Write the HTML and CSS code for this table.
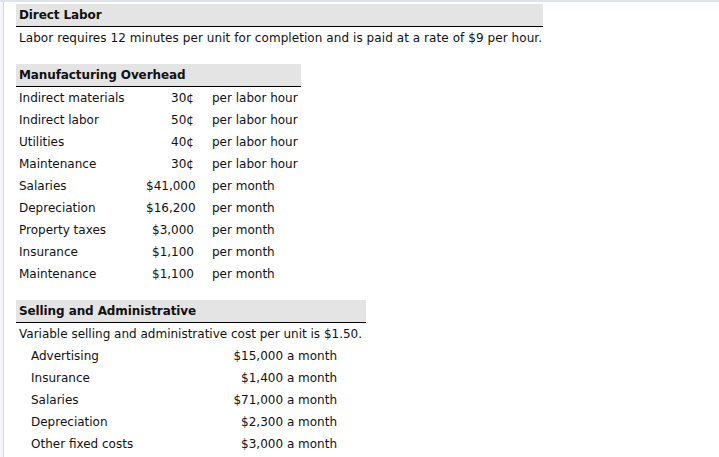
FILE: index.html
```html
<!DOCTYPE html>
<html>
<head>
<meta charset="utf-8">
<link rel="stylesheet" href="styles.css">
</head>
<body>
<div class="frame">
  <div class="content">
    <section class="block dl">
      <div class="hdr">Direct Labor</div>
      <div class="line wide">Labor requires 12 minutes per unit for completion and is paid at a rate of $9 per hour.</div>
    </section>

    <section class="block moh">
      <div class="hdr">Manufacturing Overhead</div>
      <div class="grid3">
        <div class="c1">Indirect materials</div><div class="c2">30¢</div><div class="c3">per labor hour</div>
        <div class="c1">Indirect labor</div><div class="c2">50¢</div><div class="c3">per labor hour</div>
        <div class="c1">Utilities</div><div class="c2">40¢</div><div class="c3">per labor hour</div>
        <div class="c1">Maintenance</div><div class="c2">30¢</div><div class="c3">per labor hour</div>
        <div class="c1">Salaries</div><div class="c2">$41,000</div><div class="c3">per month</div>
        <div class="c1">Depreciation</div><div class="c2">$16,200</div><div class="c3">per month</div>
        <div class="c1">Property taxes</div><div class="c2">$3,000</div><div class="c3">per month</div>
        <div class="c1">Insurance</div><div class="c2">$1,100</div><div class="c3">per month</div>
        <div class="c1">Maintenance</div><div class="c2">$1,100</div><div class="c3">per month</div>
      </div>
    </section>

    <section class="block sa">
      <div class="hdr">Selling and Administrative</div>
      <div class="line">Variable selling and administrative cost per unit is $1.50.</div>
      <div class="grid2">
        <div class="s1">Advertising</div><div class="s2">$15,000 a month</div>
        <div class="s1">Insurance</div><div class="s2">$1,400 a month</div>
        <div class="s1">Salaries</div><div class="s2">$71,000 a month</div>
        <div class="s1">Depreciation</div><div class="s2">$2,300 a month</div>
        <div class="s1">Other fixed costs</div><div class="s2">$3,000 a month</div>
      </div>
    </section>
  </div>
</div>
</body>
</html>
```

FILE: styles.css
```css
html, body {
  margin: 0;
  padding: 0;
  background: #ffffff;
}
body {
  font-family: "DejaVu Sans", Verdana, sans-serif;
  font-size: 12px;
  color: #111;
  width: 719px;
  height: 457px;
  overflow: hidden;
}
.frame {
  height: 457px;
  box-sizing: border-box;
  border-top: 2px solid #dfe4ec;
  padding-left: 4px;
  background: linear-gradient(to right, #f4f6f9 0, #f4f6f9 3px, #cfd6e0 3px, #cfd6e0 4px, #fff 4px);
}
.content {
  padding: 2px 0 0 12px;
  display: flex;
  flex-direction: column;
  align-items: flex-start;
}
.block {
  display: flex;
  flex-direction: column;
}
.hdr {
  background: #e4e4e4;
  border-bottom: 1px solid #000;
  height: 22px;
  line-height: 23px;
  font-weight: bold;
  letter-spacing: -0.1px;
  padding-left: 3px;
}
.line {
  height: 22px;
  line-height: 22px;
  padding-left: 3px;
  white-space: nowrap;
}
.line.wide { letter-spacing: 0.07px; }
.dl { width: 527px; }
.moh { width: 285px; margin-top: 15px; }
.sa { width: 350px; margin-top: 15px; }

.grid3 {
  display: grid;
  grid-template-columns: 130px 48px 107px;
  grid-auto-rows: 22px;
  line-height: 22px;
}
.c1 { padding-left: 3px; white-space: nowrap; }
.c2 { text-align: right; white-space: nowrap; }
.c3 { padding-left: 18px; white-space: nowrap; }

.grid2 {
  display: grid;
  grid-template-columns: 150px 171px;
  grid-auto-rows: 22px;
  line-height: 22px;
}
.s1 { padding-left: 15px; white-space: nowrap; }
.s2 { text-align: right; white-space: nowrap; }
```
